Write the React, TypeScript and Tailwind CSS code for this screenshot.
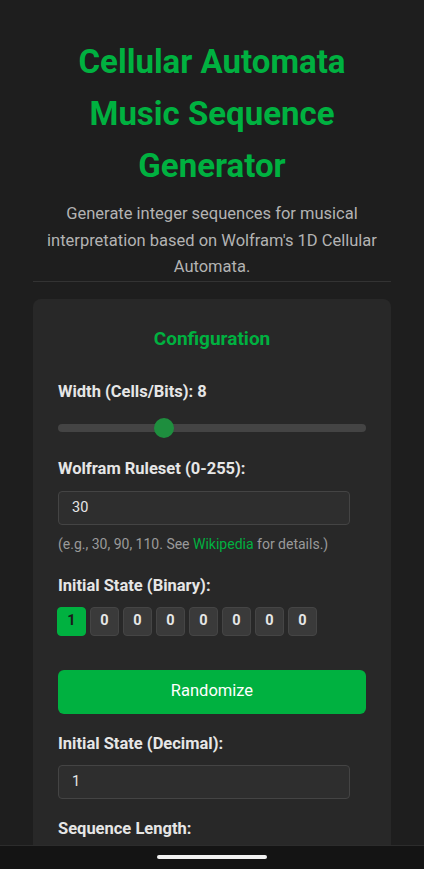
import React from "react";

const bits = [1, 0, 0, 0, 0, 0, 0, 0];

const Label = ({ children, className = "" }: { children: React.ReactNode; className?: string }) => (
  <div className={`text-[16.5px] leading-[20px] font-bold text-[#e6e6e6] ${className}`}>{children}</div>
);

const App = () => {
  return (
    <div
      className="min-h-screen bg-[#1e1e1e] px-[33px] pt-[36px]"
      style={{ fontFamily: "Roboto, 'Noto Sans', sans-serif" }}
    >
      <h1 className="text-center text-[33px] leading-[52px] font-bold text-[#00b140]">
        Cellular Automata Music Sequence Generator
      </h1>
      <p className="mt-[9px] text-center text-[16.5px] leading-[26.5px] text-[#b3b3b3]">
        Generate integer sequences for musical interpretation based on Wolfram's 1D Cellular Automata.
      </p>
      <div className="h-px bg-[#333333]" />

      <div className="mt-[17px] rounded-t-lg bg-[#282828] px-[25px] pt-[25px] pb-[12px]">
        <h2 className="text-center text-[19px] leading-[30px] font-bold text-[#00b140]">Configuration</h2>

        <Label className="mt-[28px]">Width (Cells/Bits): 8</Label>
        <div className="mt-[16px] relative h-[20px] flex items-center">
          <div className="h-[8px] w-full rounded-full bg-[#444444]" />
          <div className="absolute left-[96px] top-0 h-[20px] w-[20px] rounded-full bg-[#1e8e3e]" />
        </div>

        <Label className="mt-[21px]">Wolfram Ruleset (0-255):</Label>
        <div className="mt-[12px] flex h-[34px] w-[292px] items-center rounded-[4px] border border-[#444444] bg-[#2e2e2e] px-[13px] text-[14.5px] text-[#e6e6e6]">
          30
        </div>
        <p className="mt-[9px] text-[14px] leading-[20px] text-[#9a9a9a]">
          (e.g., 30, 90, 110. See <span className="text-[#00b140]">Wikipedia</span> for details.)
        </p>

        <Label className="mt-[22px]">Initial State (Binary):</Label>
        <div className="mt-[11px] flex gap-[4px] -ml-px">
          {bits.map((b, i) => (
            <div
              key={i}
              className={
                b
                  ? "flex h-[29px] w-[29px] items-center justify-center rounded-[4px] border border-[#00b140] bg-[#00b140] text-[14.5px] font-bold text-[#1a1a1a]"
                  : "flex h-[29px] w-[29px] items-center justify-center rounded-[4px] border border-[#454545] bg-[#3a3a3a] text-[14.5px] font-bold text-[#e6e6e6]"
              }
            >
              {b}
            </div>
          ))}
        </div>

        <button className="mt-[34px] h-[44px] w-full rounded-[6px] bg-[#00b140] text-[16.5px] text-white">
          Randomize
        </button>

        <Label className="mt-[20px]">Initial State (Decimal):</Label>
        <div className="mt-[11px] flex h-[34px] w-[292px] items-center rounded-[4px] border border-[#444444] bg-[#2e2e2e] px-[13px] text-[14.5px] text-[#e6e6e6]">
          1
        </div>

        <Label className="mt-[20px]">Sequence Length:</Label>
      </div>

      <div className="fixed bottom-0 left-0 right-0 flex h-[24px] justify-center border-t border-[#2c2c2c] bg-[#141414]">
        <div className="mt-[9px] h-[4px] w-[110px] rounded-full bg-[#f2f2f2]" />
      </div>
    </div>
  );
};

export default App;
